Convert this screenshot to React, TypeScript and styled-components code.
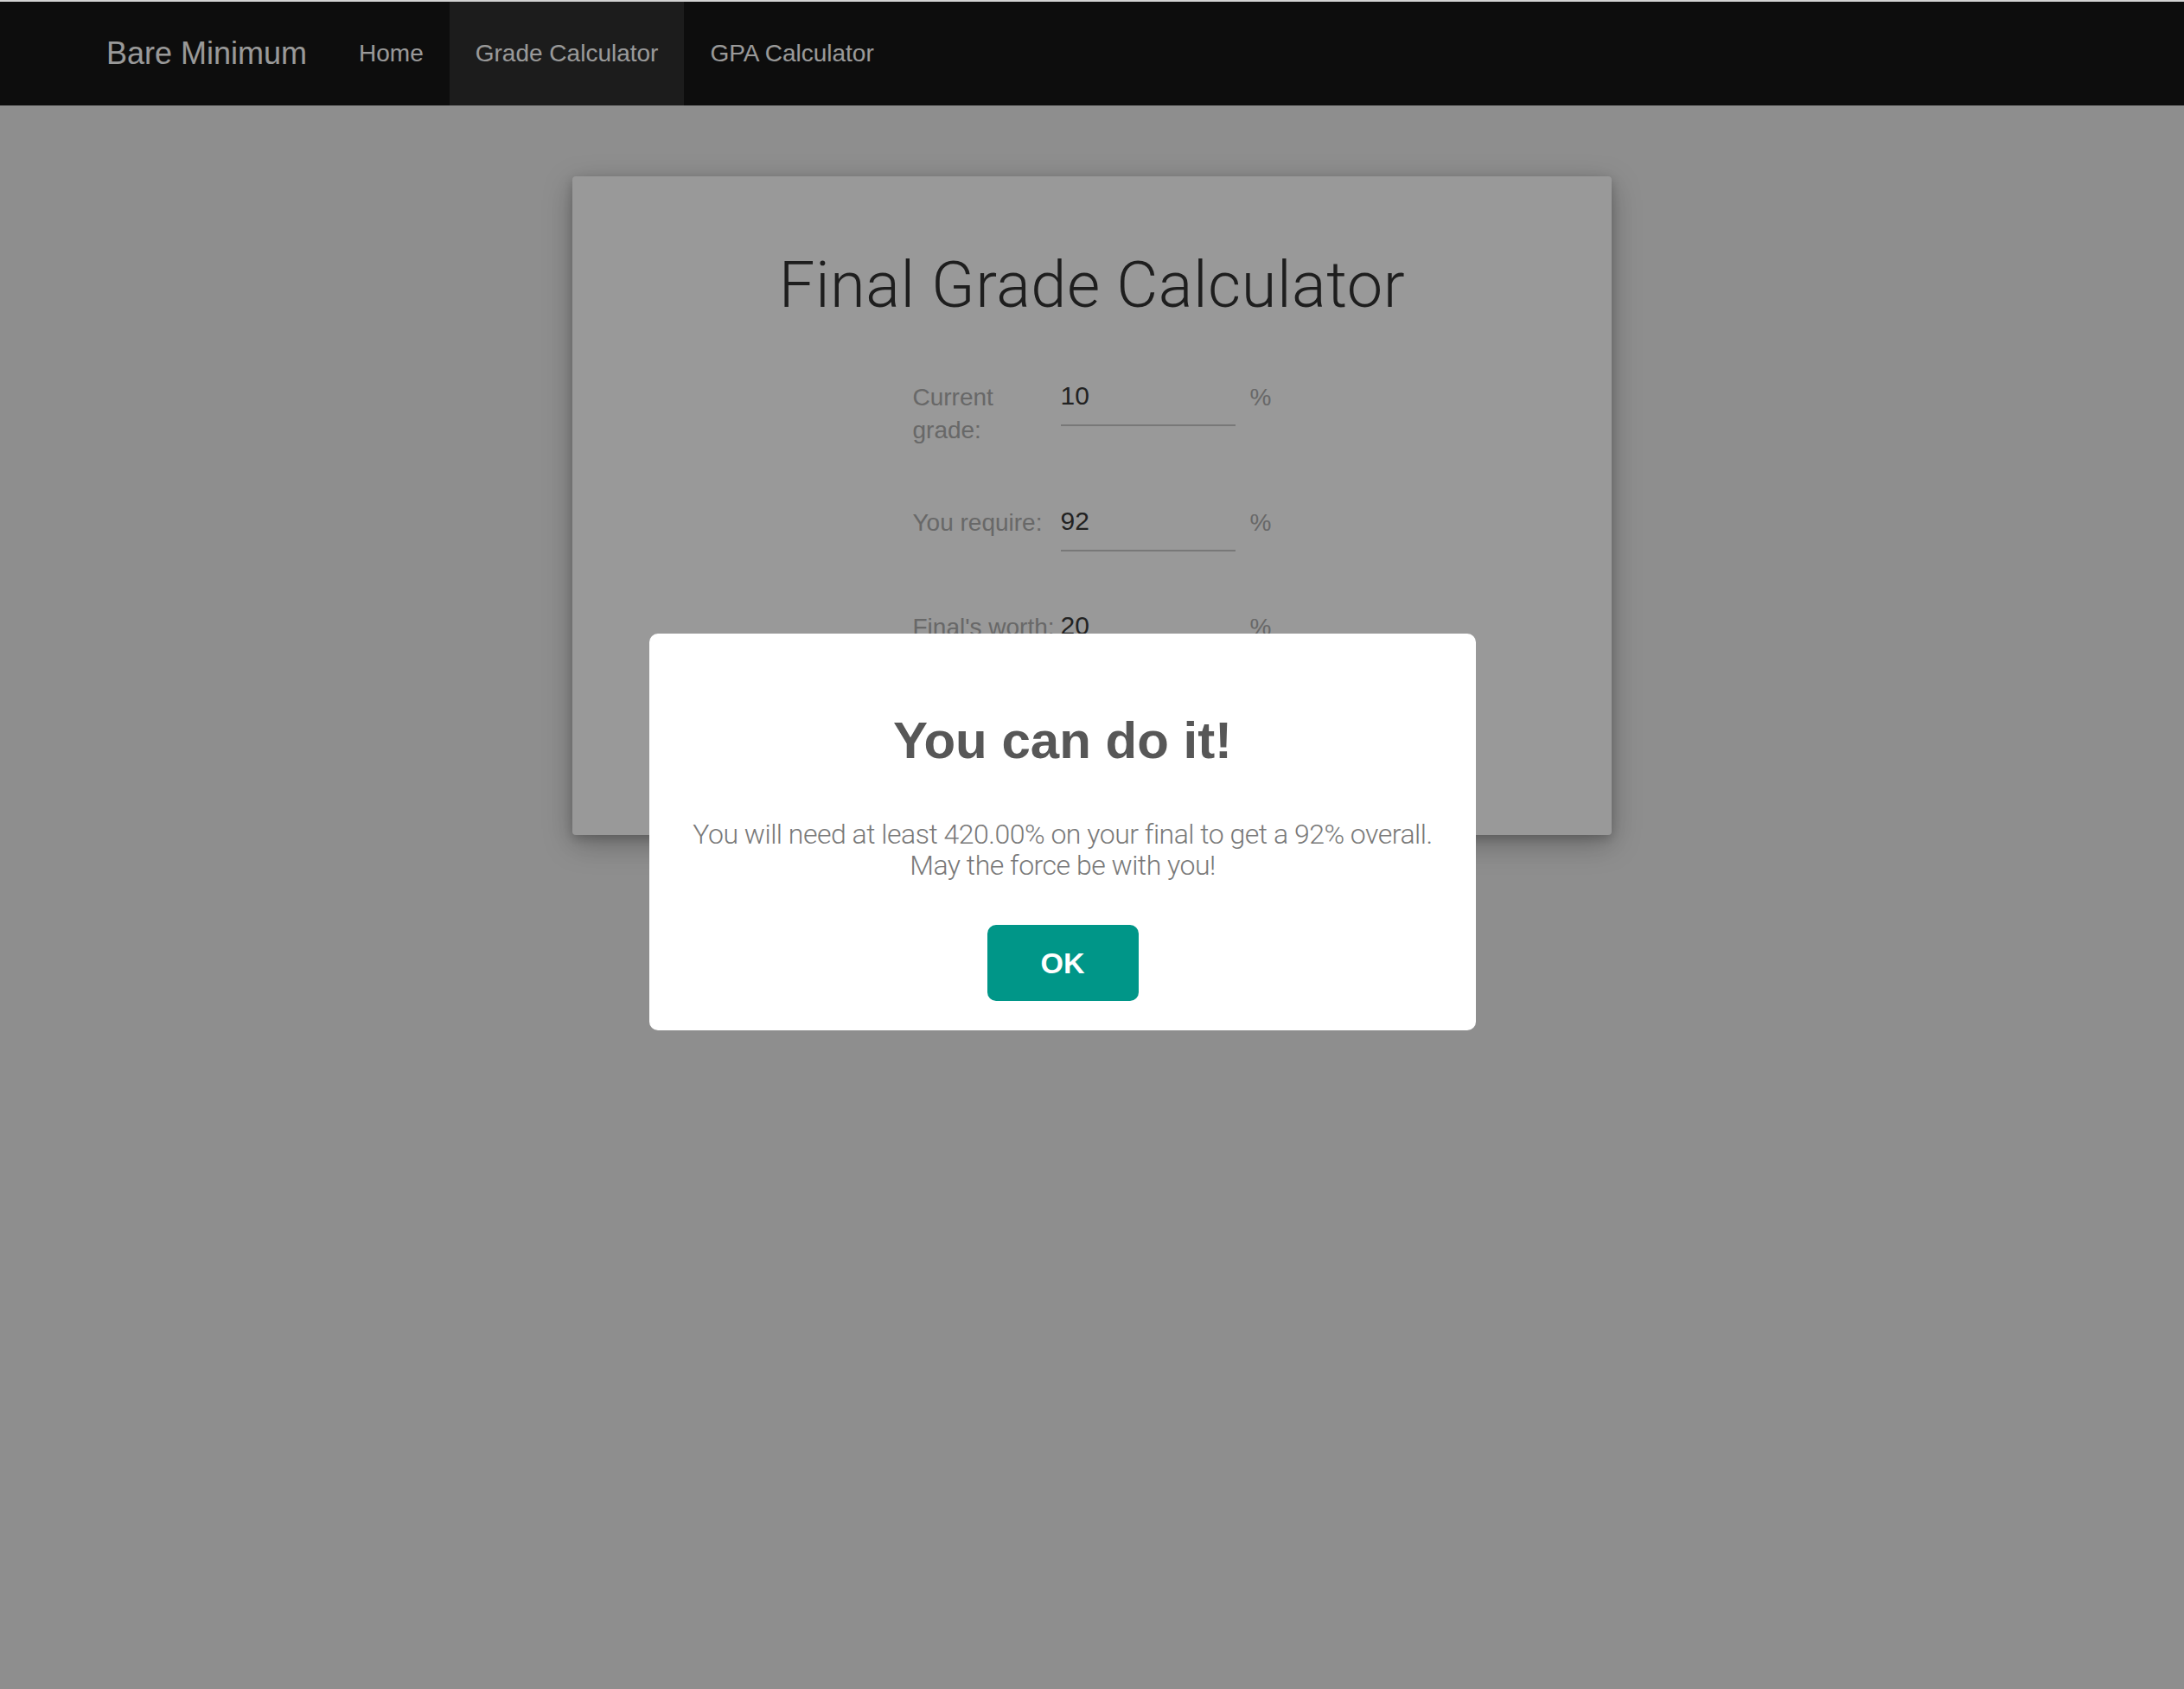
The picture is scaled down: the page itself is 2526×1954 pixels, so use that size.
import React from "react";
import styled, { createGlobalStyle } from "styled-components";

const GlobalStyle = createGlobalStyle`
  * { box-sizing: border-box; }
  html {
    background: #ededed;
  }
  html, body {
    margin: 0;
    padding: 0;
  }
  body {
    min-height: 1954px;
    border-top: 2px solid #d2d2d2;
    background: #ededed;
    font-family: "Liberation Sans", Arial, Helvetica, sans-serif;
    color: #333;
  }
`;

const Navbar = styled.nav`
  height: 120px;
  background: #171717;
`;

const NavContainer = styled.div`
  width: 2340px;
  height: 100%;
  margin: 0 auto;
  display: flex;
  align-items: stretch;
`;

const Brand = styled.a`
  display: flex;
  align-items: center;
  padding: 0 30px;
  font-size: 36px;
  color: #fff;
  text-decoration: none;
`;

const NavList = styled.ul`
  display: flex;
  margin: 0;
  padding: 0;
  list-style: none;
`;

const NavItem = styled.li`
  display: flex;
`;

const NavLink = styled.a<{ $active?: boolean }>`
  display: flex;
  align-items: center;
  padding: 0 30px;
  font-size: 28px;
  color: #fff;
  text-decoration: none;
  background: ${(p) => (p.$active ? "#2f2f2f" : "transparent")};
`;

const Main = styled.main`
  display: flex;
  justify-content: center;
  padding-top: 82px;
`;

const Card = styled.section`
  width: 1202px;
  padding: 86px 0 207px;
  background: #fff;
  border-radius: 4px;
  box-shadow: 0 10px 34px rgba(0, 0, 0, 0.28), 0 4px 12px rgba(0, 0, 0, 0.18);
  display: flex;
  flex-direction: column;
  align-items: center;
`;

const Title = styled.h1`
  margin: 0;
  font-family: Roboto, "Liberation Sans", sans-serif;
  font-weight: 300;
  font-size: 74px;
  letter-spacing: 0.5px;
  line-height: 79px;
  color: #333;
`;

const Form = styled.form`
  margin-top: 69px;
  display: flex;
  flex-direction: column;
  gap: 66px;
`;

const Field = styled.div`
  display: grid;
  grid-template-columns: 171px 202px 42px;
  align-items: start;
`;

const Label = styled.label`
  margin-top: 3px;
  font-size: 28px;
  line-height: 38px;
  color: #adadad;
`;

const Input = styled.input`
  box-sizing: content-box;
  width: 202px;
  height: 40px;
  padding: 0 0 13px;
  margin: 0;
  border: none;
  border-bottom: 2px solid #c8c8c8;
  background: transparent;
  outline: none;
  font-family: "Liberation Sans", Arial, sans-serif;
  font-size: 30px;
  line-height: 40px;
  color: #3a3a3a;
`;

const Unit = styled.span`
  margin-top: 3px;
  padding-left: 17px;
  font-size: 28px;
  line-height: 38px;
  color: #adadad;
`;

const Overlay = styled.div`
  position: fixed;
  top: 2px;
  left: 0;
  right: 0;
  bottom: 0;
  background: rgba(0, 0, 0, 0.4);
  z-index: 10;
`;

const Dialog = styled.div`
  position: fixed;
  top: 50%;
  left: 50%;
  width: 956px;
  margin-left: -512px;
  margin-top: -244px;
  padding: 34px;
  background: #fff;
  border-radius: 10px;
  text-align: center;
  z-index: 11;
`;

const DialogTitle = styled.h2`
  margin: 50px 0;
  font-size: 60px;
  line-height: 80px;
  font-weight: 700;
  color: #575757;
`;

const DialogText = styled.p`
  margin: 0;
  font-family: Roboto, "Liberation Sans", sans-serif;
  font-weight: 300;
  font-size: 32px;
  letter-spacing: -0.5px;
  line-height: 36px;
  color: #797979;
`;

const ConfirmButton = styled.button`
  margin-top: 51px;
  padding: 20px 62px;
  border: none;
  border-radius: 10px;
  background: #009688;
  color: #fff;
  font-family: "Liberation Sans", Arial, sans-serif;
  font-size: 34px;
  line-height: 48px;
  font-weight: 700;
  cursor: pointer;
`;

const fields = [
  { id: "current", label: "Current grade:", value: "10" },
  { id: "required", label: "You require:", value: "92" },
  { id: "worth", label: "Final's worth:", value: "20" },
];

export default function App() {
  return (
    <>
      <GlobalStyle />
      <Navbar>
        <NavContainer>
          <Brand href="#">Bare Minimum</Brand>
          <NavList>
            <NavItem>
              <NavLink href="#">Home</NavLink>
            </NavItem>
            <NavItem>
              <NavLink href="#" $active>
                Grade Calculator
              </NavLink>
            </NavItem>
            <NavItem>
              <NavLink href="#">GPA Calculator</NavLink>
            </NavItem>
          </NavList>
        </NavContainer>
      </Navbar>
      <Main>
        <Card>
          <Title>Final Grade Calculator</Title>
          <Form onSubmit={(e) => e.preventDefault()}>
            {fields.map((f) => (
              <Field key={f.id}>
                <Label htmlFor={f.id}>{f.label}</Label>
                <Input id={f.id} defaultValue={f.value} />
                <Unit>%</Unit>
              </Field>
            ))}
          </Form>
        </Card>
      </Main>
      <Overlay />
      <Dialog role="dialog">
        <DialogTitle>You can do it!</DialogTitle>
        <DialogText>
          You will need at least 420.00% on your final to get a 92% overall.
          <br />
          May the force be with you!
        </DialogText>
        <ConfirmButton type="button">OK</ConfirmButton>
      </Dialog>
    </>
  );
}
